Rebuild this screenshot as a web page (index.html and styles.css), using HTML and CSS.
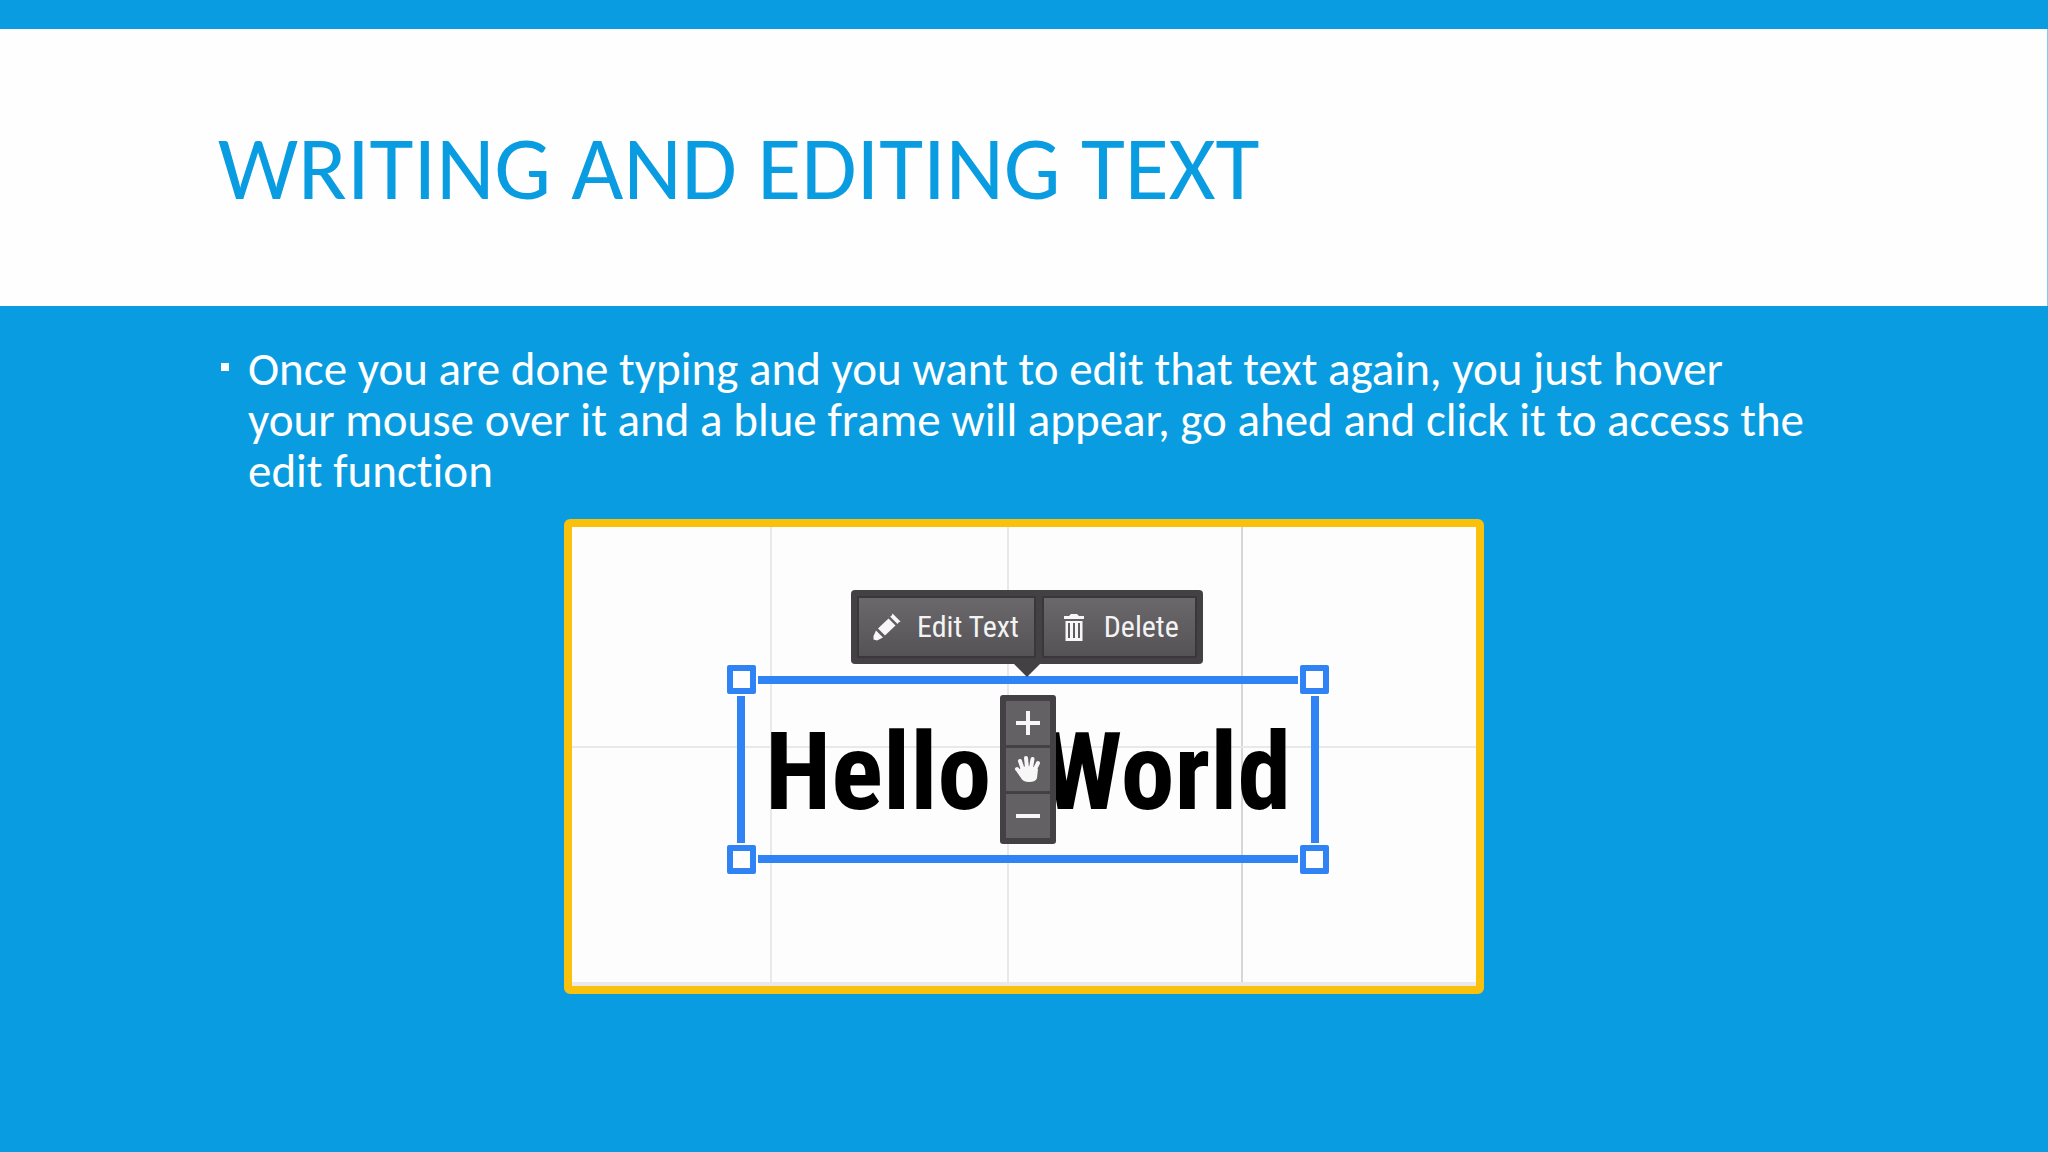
FILE: index.html
```
<!DOCTYPE html>
<html lang="en">
<head>
<meta charset="utf-8">
<title>Writing and editing text</title>
<link rel="stylesheet" href="styles.css">
</head>
<body>
<header class="banner">
  <h1 class="title">WRITING AND EDITING TEXT</h1>
</header>
<main class="content">
  <ul class="points">
    <li class="point">Once you are done typing and you want to edit that text again, you just hover your mouse over it and a blue frame will appear, go ahed and click it to access the edit function</li>
  </ul>
  <div class="canvas">
    <span class="rule rule-a"></span>
    <span class="rule rule-b"></span>
    <span class="rule rule-c"></span>
    <span class="rule rule-across"></span>
    <span class="rule rule-bottom"></span>
    <div class="selection">
      <span class="word">Hello</span>
      <span class="word">World</span>
      <span class="handle top left"></span>
      <span class="handle top right"></span>
      <span class="handle bottom left"></span>
      <span class="handle bottom right"></span>
    </div>
    <div class="toolbar">
      <button class="tool tool-edit" type="button">
        <svg class="tool-icon" viewBox="0 0 28 28" aria-hidden="true"><path d="M17 3.500Q19 3 19.500 .500L27.500 8.500Q25 9 24.500 11Z"/><path d="M15.500 5.500 22.500 12.500 12 22.500 5 15.500Z"/><path d="M3 17.500 10 24.500 4 27.500 .500 26.500 .500 23Z"/></svg>
        Edit Text
      </button>
      <button class="tool tool-delete" type="button">
        <svg class="tool-icon" viewBox="0 0 28 28" aria-hidden="true"><path d="M4 3h5l2-2h6l2 2h5v3H4Z"/><path fill-rule="evenodd" d="M5.500 8h17v20h-17ZM8 10v15h2V10Zm5 0v15h2V10Zm5 0v15h2V10Z"/></svg>
        Delete
      </button>
    </div>
    <div class="mover">
      <button class="step" type="button" aria-label="Increase"><svg class="step-icon" viewBox="0 0 28 28"><path d="M12 2h4v10h10v4H16v10h-4V16H2v-4h10Z"/></svg></button>
      <button class="step" type="button" aria-label="Move"><svg class="step-icon" viewBox="0 0 28 28"><g fill="none" stroke="#f7f7f7" stroke-width="4" stroke-linecap="round"><path d="M9 15 6 6M13 13 12 3M17 13 18.500 4M20.500 15 24 8M8 20 3 14"/></g><path d="M7 13q7-4 15 0l2 1L23 23q-1 4-8 4-6 0-8-4L3 17Z"/></svg></button>
      <button class="step" type="button" aria-label="Decrease"><svg class="step-icon" viewBox="0 0 28 28"><path d="M2 12h24v4H2Z"/></svg></button>
    </div>
  </div>
</main>
</body>
</html>
```
FILE: styles.css
```
* {
  box-sizing: border-box;
}

body {
  margin: 0;
  min-height: 100vh;
  background: #099ce1;
  color: #fff;
  font-family: Carlito, "Open Sans", sans-serif;
  font-variant-ligatures: none;
}

.banner {
  margin-top: 29px;
  min-height: 277px;
  padding: 0 218px;
  display: flex;
  align-items: center;
  border-right: 1px solid #7ccdf0;
  background: #fefefe;
}

.title {
  margin: 0;
  color: #099ce1;
  font-size: 90px;
  line-height: 100px;
  font-weight: 400;
}

.content {
  padding: 38px 234px 40px 220px;
}

.points {
  margin: 0;
  padding: 0;
  list-style: none;
}

.point {
  position: relative;
  padding-left: 28px;
  font-size: 47px;
  line-height: 51px;
}

.point::before {
  content: "";
  position: absolute;
  left: 1px;
  top: 19px;
  width: 8px;
  height: 8px;
  background: #fff;
}

.canvas {
  position: relative;
  width: 920px;
  height: 475px;
  margin: 22px 0 0 344px;
  border: 8px solid #f9c00c;
  border-radius: 6px;
  background: #fefdfe;
}

.rule {
  position: absolute;
  background: #ebe8eb;
}

.rule-a,
.rule-b,
.rule-c {
  top: 0;
  bottom: 0;
  width: 2px;
}

.rule-a { left: 198px; }
.rule-b { left: 435px; }
.rule-c { left: 669px; background: #d6d5d8; }

.rule-across {
  left: 0;
  right: 0;
  top: 219px;
  height: 2px;
}

.rule-bottom {
  left: 0;
  right: 0;
  bottom: 0;
  height: 4px;
}

.selection {
  position: absolute;
  left: 165px;
  top: 149px;
  width: 582px;
  height: 187px;
  padding: 4px 20px 0;
  display: flex;
  align-items: center;
  justify-content: space-between;
  border: 8px solid #2f83f5;
}

.word {
  color: #000;
  font-family: "Roboto Condensed", Roboto, sans-serif;
  font-size: 108px;
  line-height: 130px;
  font-weight: 700;
}

.handle {
  position: absolute;
  width: 29px;
  height: 29px;
  border: 6px solid #2f83f5;
  border-radius: 2px;
  background: #fefefe;
  box-shadow: 0 0 0 2px #fff;
}

.top { top: -19px; }
.bottom { bottom: -19px; }
.left { left: -18px; }
.right { right: -18px; }

.toolbar {
  position: absolute;
  left: 279px;
  top: 63px;
  width: 352px;
  height: 74px;
  padding: 8px;
  display: flex;
  gap: 10px;
  border-radius: 4px;
  background: #434144;
}

.toolbar::after {
  content: "";
  position: absolute;
  left: 163px;
  top: 74px;
  border: 13px solid transparent;
  border-top-color: #434144;
  border-bottom: 0;
}

.tool {
  flex: 149 1 0;
  display: flex;
  align-items: center;
  gap: 16px;
  padding: 0 0 0 16px;
  border: 0;
  background: linear-gradient(#6a686b, #555356);
  box-shadow: 0 0 0 2px #39373a;
  color: #f4f3f4;
  font-family: "Roboto Condensed", Roboto, sans-serif;
  font-size: 30px;
  line-height: 36px;
  white-space: nowrap;
}

.tool-edit {
  flex-grow: 177;
  padding-left: 14px;
}

.tool-icon {
  flex: none;
  width: 28px;
  height: 28px;
  fill: #f7f7f7;
}

.mover {
  position: absolute;
  left: 428px;
  top: 168px;
  width: 56px;
  height: 149px;
  padding: 6px;
  display: grid;
  grid-auto-rows: 1fr;
  gap: 3px;
  border-radius: 3px;
  background: #434144;
}

.step {
  display: grid;
  place-items: center;
  padding: 0;
  border: 0;
  background: #636164;
}

.step-icon {
  width: 28px;
  height: 28px;
  fill: #f7f7f7;
}
```
